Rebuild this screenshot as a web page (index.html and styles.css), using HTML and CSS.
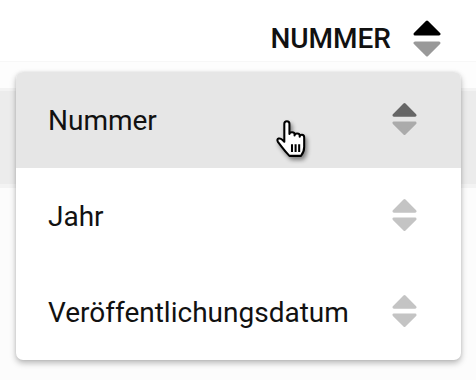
FILE: index.html
```html
<!DOCTYPE html>
<html>
<head>
<meta charset="utf-8">
<link rel="stylesheet" href="styles.css">
</head>
<body>
<div class="page">
  <div class="header">
    <span class="header-label">NUMMER</span>
    <svg class="sort-icon header-icon" viewBox="0 0 28 38" width="28" height="38">
      <path class="up" d="M14 2 L26 14 L2 14 Z"/>
      <path class="down" d="M2 23 L26 23 L14 35 Z"/>
    </svg>
  </div>
  <div class="table">
    <div class="row row-gap"></div>
    <div class="row row-hover"></div>
    <div class="row row-plain"></div>
  </div>

  <div class="menu">
    <div class="item active">
      <span class="item-label">Nummer</span>
      <svg class="sort-icon" viewBox="0 0 28 38" width="27" height="38">
        <path class="up" d="M14 3 L25 14 L3 14 Z"/>
        <path class="down" d="M3 22 L25 22 L14 33 Z"/>
      </svg>
    </div>
    <div class="item">
      <span class="item-label">Jahr</span>
      <svg class="sort-icon" viewBox="0 0 28 38" width="27" height="38">
        <path class="up" d="M14 3 L25 14 L3 14 Z"/>
        <path class="down" d="M3 22 L25 22 L14 33 Z"/>
      </svg>
    </div>
    <div class="item">
      <span class="item-label">Veröffentlichungsdatum</span>
      <svg class="sort-icon" viewBox="0 0 28 38" width="27" height="38">
        <path class="up" d="M14 3 L25 14 L3 14 Z"/>
        <path class="down" d="M3 22 L25 22 L14 33 Z"/>
      </svg>
    </div>
  </div>

  <svg class="cursor" viewBox="0 0 28 32" width="36" height="41">
    <path d="M8 3 Q8 1 10 1 Q12 1 12 3 L12 11 Q12 9.5 14 9.5 Q16 9.5 16 11 L16 12 Q16 10.5 18 10.5 Q20 10.5 20 12 L20 13 Q20 11.5 21.8 11.5 Q23.5 11.5 23.5 13.5 L23.5 21 Q23.5 25 21 28 L12 28 Q9 25 6 21 L3 17 Q2 15 3.5 14.5 Q5 14 6.5 15.5 L8 17 Z" fill="#fff" stroke="#000" stroke-width="1.6" stroke-linejoin="round"/>
    <path d="M14 19 V25 M16.8 19 V25 M19.6 19 V25" stroke="#000" stroke-width="1.6"/>
  </svg>
</div>
</body>
</html>
```

FILE: styles.css
```css
html, body {
  margin: 0;
  padding: 0;
  background: #ffffff;
}

.page {
  position: relative;
  width: 476px;
  height: 380px;
  overflow: hidden;
  font-family: Roboto, "Liberation Sans", sans-serif;
  color: #111;
}

.header {
  height: 62px;
  display: flex;
  align-items: center;
  justify-content: flex-end;
  gap: 22px;
  padding-right: 35px;
  padding-top: 16px;
  box-sizing: border-box;
  border-bottom: 1px solid #f7f7f7;
}

.header-label {
  font-size: 28px;
  font-weight: 500;
  color: #111;
}

.sort-icon path {
  stroke-width: 3;
  stroke-linejoin: round;
}

.header-icon .up { fill: #000; stroke: #000; }
.header-icon .down { fill: #999; stroke: #999; }

.table {
  display: flex;
  flex-direction: column;
}

.row-gap {
  height: 26px;
  background: #fdfdfd;
}

.row-hover {
  height: 100px;
  background: #ececec;
  border-top: 3px solid #f3f3f3;
  border-bottom: 4px solid #f3f3f3;
  box-sizing: border-box;
}

.row-plain {
  height: 200px;
  background: #fcfcfc;
}

.menu {
  position: absolute;
  left: 16px;
  top: 72px;
  width: 445px;
  background: #fff;
  border-radius: 7px;
  overflow: hidden;
  box-shadow: 0 3px 6px rgba(0, 0, 0, 0.28), 0 0 3px rgba(0, 0, 0, 0.08);
  display: flex;
  flex-direction: column;
}

.item {
  height: 96px;
  display: flex;
  align-items: center;
  justify-content: space-between;
  padding: 0 43px 0 32px;
}

.item.active {
  background: #e6e6e6;
}

.item-label {
  font-size: 28px;
  font-weight: 400;
  color: #111;
}

.item .up { fill: #c4c4c4; stroke: #c4c4c4; }
.item .down { fill: #c4c4c4; stroke: #c4c4c4; }
.item.active .up { fill: #666; stroke: #666; }
.item.active .down { fill: #ababab; stroke: #ababab; }

.cursor {
  position: absolute;
  left: 274px;
  top: 120px;
  filter: drop-shadow(2px 3px 2px rgba(0, 0, 0, 0.45));
}
```
